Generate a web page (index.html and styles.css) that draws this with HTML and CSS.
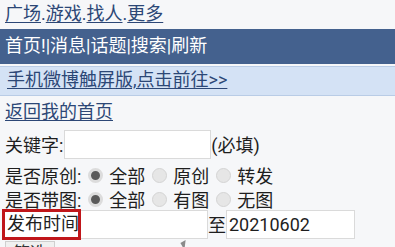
FILE: index.html
```html
<!DOCTYPE html>
<html lang="zh">
<head>
<meta charset="utf-8">
<link rel="stylesheet" href="styles.css">
</head>
<body>
<div class="top"><a href="#">广场</a>.<a href="#">游戏</a>.<a href="#">找人</a>.<a href="#">更多</a></div>
<div class="nav">首页!|消息|话题|搜索|刷新</div>
<div class="tip"><a href="#">手机微博触屏版,点击前往&gt;&gt;</a></div>
<div class="back"><a href="#">返回我的首页</a></div>
<div class="row kw"><span>关键字:</span><span class="input kwin"></span><span>(必填)</span></div>
<div class="row radios first"><span>是否原创:</span>
  <span class="radio on"></span><span>全部</span>
  <span class="radio"></span><span>原创</span>
  <span class="radio"></span><span>转发</span>
</div>
<div class="row radios"><span>是否带图:</span>
  <span class="radio on"></span><span>全部</span>
  <span class="radio"></span><span>有图</span>
  <span class="radio"></span><span>无图</span>
</div>
<div class="row time"><span class="mark">发布时间</span><span class="input d1"></span><span>至</span><span class="input d2">20210602</span></div>
<div class="row btnrow"><span class="btn">筛选</span><span class="cursor"></span></div>
</body>
</html>
```
FILE: styles.css
```css
html, body { margin: 0; padding: 0; }
body {
  width: 395px; height: 247px; overflow: hidden;
  background: #f6f7f9;
  font-family: Roboto, "Noto Sans CJK SC", sans-serif;
  font-size: 18px;
  color: #1e1e1e;
}
a { color: #2c4776; text-decoration: underline; text-underline-offset: 2px; }
.top { height: 29px; line-height: 27px; padding-left: 5px; color: #2c4776; }
.nav {
  height: 35px; line-height: 34px; background: #44618e; color: #fff;
  padding-left: 5px; border-bottom: 2px solid #f6f7f9;
}
.tip {
  height: 28px; line-height: 26px; background: #d4e2f5;
  border-top: 1px solid #b9cce6; border-bottom: 1px solid #b9cce6;
  padding-left: 7px;
}
.back { height: 32px; line-height: 32px; padding-left: 5px; }
.row { display: flex; align-items: center; padding-left: 5px; white-space: nowrap; }
.input { display: inline-block; background: #fff; border: 1px solid #dadada; box-sizing: border-box; }
.kw { height: 32px; }
.kwin { width: 147px; height: 29px; margin-left: 1px; }
.radios { height: 24px; }
.radios.first { margin-top: 3px; }
.radio {
  width: 15px; height: 15px; border-radius: 50%; box-sizing: border-box;
  background: #e6e6e6; border: 1px solid #d4d4d4; margin: 0 6px 0 7px;
}
.radio:first-of-type { margin-left: 4px; }
.radio.on { background: #5a5a5a; border: 3px solid #dcdcdc; }
.time { height: 32px; padding-left: 2px; margin-top: -3px; }
.mark {
  border: 3px solid #c0161a; height: 31px; box-sizing: border-box; width: 79px;
  line-height: 24px; padding-left: 2px; background: #fff; position: relative; z-index: 1;
  overflow: hidden;
}
.d1 { width: 128px; height: 29px; margin-left: -1px; }
.d2 { width: 129px; height: 29px; line-height: 27px; padding-left: 2px; }
.btnrow { height: 7px; align-items: flex-start; position: relative; overflow: hidden; }
.btn {
  display: inline-block; width: 50px; height: 12px; background: #f0f0f0;
  border: 1px solid #cfcfcf; border-bottom: none; box-sizing: border-box; margin-top: 1px;
  text-align: center; line-height: 22px; font-size: 17px; color: #333; overflow: hidden;
}
.cursor {
  position: absolute; left: 182px; top: 1px; width: 0; height: 0;
  border-left: 6px solid #8a8a8a; border-bottom: 8px solid transparent;
  transform: rotate(-30deg);
}
```
